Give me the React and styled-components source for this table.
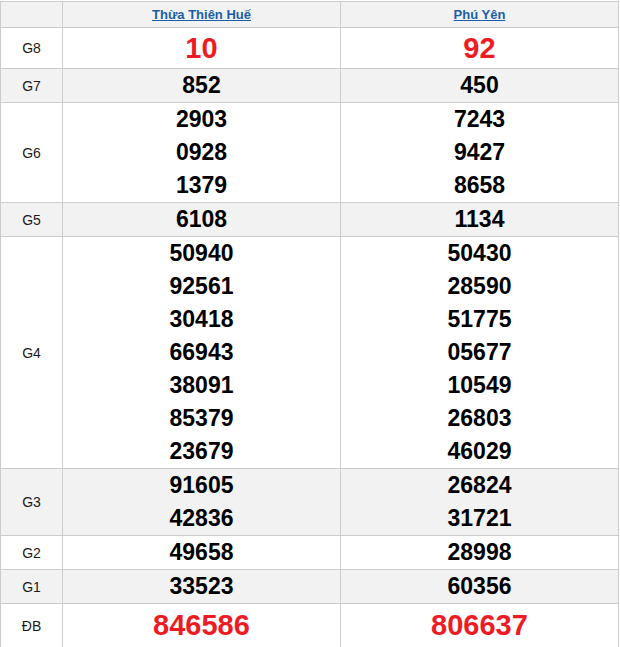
import React from 'react';
import styled, { createGlobalStyle } from 'styled-components';

const GlobalStyle = createGlobalStyle`
  body {
    margin: 0;
    font-family: "Liberation Sans", Arial, sans-serif;
    background: #fff;
  }
`;

const Wrapper = styled.div`
  padding-top: 1px;
  width: 619px;
`;

const Table = styled.table`
  width: 619px;
  border-collapse: collapse;
  table-layout: fixed;
  font-family: "Liberation Sans", Arial, sans-serif;
`;

const Row = styled.tr`
  background: ${props => (props.shaded ? '#f2f2f2' : '#ffffff')};
`;

const HeadCell = styled.th`
  height: 25px;
  padding: 0;
  border: 1px solid #cccccc;
  text-align: center;
  vertical-align: middle;
  font-size: 13px;
  font-weight: bold;
`;

const ProvinceLink = styled.a`
  color: #1a5ea8;
  text-decoration: underline;
`;

const Label = styled.td`
  padding: 0;
  border: 1px solid #cccccc;
  text-align: center;
  vertical-align: middle;
  font-size: 14px;
  color: #1a1a1a;
`;

const Cell = styled.td`
  padding: 0;
  border: 1px solid #cccccc;
  text-align: center;
  vertical-align: middle;
`;

const Number = styled.div`
  font-weight: bold;
  font-size: ${props => (props.big ? '29px' : '23px')};
  line-height: ${props => props.lh || '33px'};
  color: ${props => (props.big ? '#ed1c24' : '#000000')};
`;

const provinces = ['Thừa Thiên Huế', 'Phú Yên'];

const prizes = [
  { label: 'G8', big: true, lh: '40px', values: [['10'], ['92']] },
  { label: 'G7', values: [['852'], ['450']] },
  { label: 'G6', values: [['2903', '0928', '1379'], ['7243', '9427', '8658']] },
  { label: 'G5', values: [['6108'], ['1134']] },
  {
    label: 'G4',
    values: [
      ['50940', '92561', '30418', '66943', '38091', '85379', '23679'],
      ['50430', '28590', '51775', '05677', '10549', '26803', '46029'],
    ],
  },
  { label: 'G3', values: [['91605', '42836'], ['26824', '31721']] },
  { label: 'G2', values: [['49658'], ['28998']] },
  { label: 'G1', values: [['33523'], ['60356']] },
  { label: 'ĐB', big: true, lh: '43px', values: [['846586'], ['806637']] },
];

export default function App() {
  return (
    <Wrapper>
      <GlobalStyle />
      <Table>
        <colgroup>
          <col style={{ width: '62px' }} />
          <col />
          <col />
        </colgroup>
        <thead>
          <Row shaded>
            <HeadCell />
            {provinces.map(p => (
              <HeadCell key={p}>
                <ProvinceLink href="#">{p}</ProvinceLink>
              </HeadCell>
            ))}
          </Row>
        </thead>
        <tbody>
          {prizes.map((prize, i) => (
            <Row key={prize.label} shaded={i % 2 === 1}>
              <Label>{prize.label}</Label>
              {prize.values.map((col, j) => (
                <Cell key={j}>
                  {col.map((n, k) => (
                    <Number key={k} big={prize.big} lh={prize.lh}>
                      {n}
                    </Number>
                  ))}
                </Cell>
              ))}
            </Row>
          ))}
        </tbody>
      </Table>
    </Wrapper>
  );
}
